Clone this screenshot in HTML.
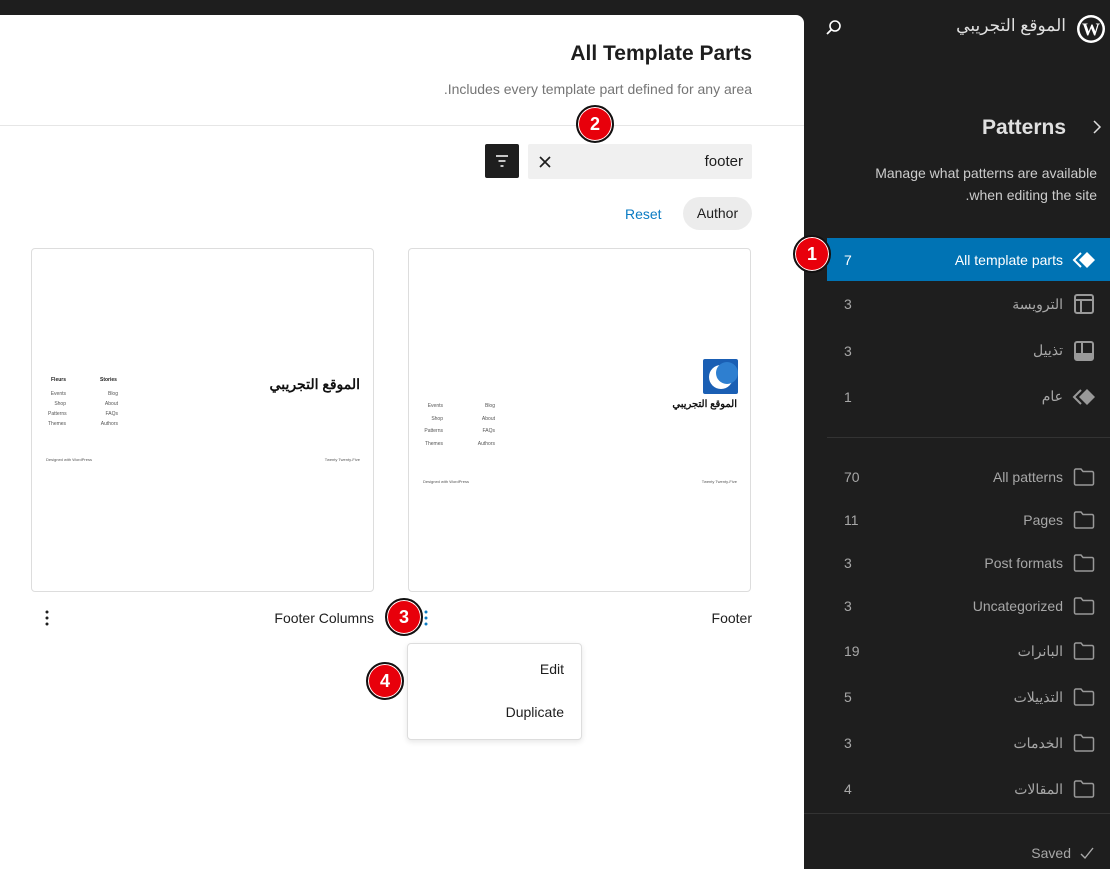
<!DOCTYPE html>
<html><head><meta charset="utf-8"><style>
*{margin:0;padding:0;box-sizing:border-box}
body{width:1110px;height:869px;background:#1e1e1e;font-family:"Liberation Sans","Noto Sans CJK SC",sans-serif;position:relative;overflow:hidden}
.a{position:absolute;white-space:nowrap}
.panel{position:absolute;left:0;top:15px;width:804px;height:854px;background:#fff;border-top-right-radius:8px}
.r{text-align:right}
.side{color:#a7a7a7;font-size:14px}
.badge{position:absolute;width:38px;height:38px;border-radius:50%;background:#e8000b;border:2px solid #111;box-shadow:0 0 0 1px #fff inset;color:#fff;font-weight:bold;font-size:18px;text-align:center;line-height:34px}
.card{position:absolute;top:248px;width:343px;height:344px;border:1px solid #ddd;border-radius:4px;background:#fff}
.t{position:absolute;font-size:5px;color:#555;white-space:nowrap}
</style></head><body>
<div class="panel"></div>
<svg class="a" style="left:1076px;top:14px" width="30" height="30" viewBox="0 0 30 30"><circle cx="15" cy="15" r="14" fill="#fff"/><circle cx="15" cy="15" r="11.5" fill="#1e1e1e"/><text x="15" y="21.5" font-family="Liberation Serif" font-weight="bold" font-size="18" fill="#fff" text-anchor="middle">W</text></svg>
<div class="a" style="right:44px;top:16px;color:#e0e0e0;font-size:17px">الموقع التجريبي</div>
<svg class="a" style="left:825px;top:19px" width="18" height="18" viewBox="0 0 18 18"><circle cx="10" cy="7" r="5" fill="none" stroke="#fff" stroke-width="1.6"/><path d="M6.5 10.5L2 15" stroke="#fff" stroke-width="1.8"/></svg>
<div class="a" style="right:44px;top:116px;color:#e0e0e0;font-size:21px;font-weight:bold">Patterns</div>
<svg class="a" style="left:1092px;top:120px" width="10" height="14"><path d="M2 1l6 6-6 6" fill="none" stroke="#ddd" stroke-width="1.5"/></svg>
<div class="a r" style="right:13px;top:162px;color:#ccc;font-size:14px;line-height:22px">Manage what patterns are available<br>.when editing the site</div>
<div class="a" style="left:827px;top:238px;width:283px;height:43px;background:#0073b4"></div>
<div class="a" style="left:844px;top:252px;color:#fff;font-size:14px">7</div>
<div class="a" style="right:47px;top:252px;color:#fff;font-size:14px">All template parts</div>
<svg class="a" style="left:1072px;top:249px" width="24" height="22" viewBox="0 0 24 22"><path d="M9 4L2 11l7 7" fill="none" stroke="#fff" stroke-width="2"/><path d="M15 3l8 8-8 8-8-8z" fill="#fff"/></svg>
<div class="a side" style="left:844px;top:296px">3</div><div class="a side" style="right:47px;top:296px">الترويسة</div>
<svg class="a" style="left:1074px;top:294px" width="20" height="20"><rect x="1" y="1" width="18" height="18" rx="2" fill="none" stroke="#999" stroke-width="2"/><path d="M1 6h18M7 6v13" stroke="#999" stroke-width="2"/></svg>
<div class="a side" style="left:844px;top:343px">3</div><div class="a side" style="right:47px;top:342px">تذييل</div>
<svg class="a" style="left:1074px;top:341px" width="20" height="20"><rect x="1" y="1" width="18" height="18" rx="2" fill="none" stroke="#999" stroke-width="2"/><rect x="1" y="12" width="18" height="7" fill="#999"/><path d="M8 1v12" stroke="#999" stroke-width="2"/></svg>
<div class="a side" style="left:844px;top:389px">1</div><div class="a side" style="right:47px;top:388px">عام</div>
<svg class="a" style="left:1072px;top:386px" width="24" height="22" viewBox="0 0 24 22"><path d="M9 4L2 11l7 7" fill="none" stroke="#999" stroke-width="2"/><path d="M15 3l8 8-8 8-8-8z" fill="#999"/></svg>
<div class="a" style="left:827px;top:437px;width:283px;height:1px;background:#333"></div>
<div id="folders"></div>
<div class="a" style="left:804px;top:813px;width:306px;height:1px;background:#333"></div>
<div class="a side" style="right:39px;top:845px">Saved</div>
<svg class="a" style="left:1080px;top:846px" width="14" height="14"><path d="M1 8l4 4 8-10" fill="none" stroke="#aaa" stroke-width="1.4"/></svg>
<div class="badge" style="left:793px;top:235px">1</div>

<div class="a" style="right:358px;top:42px;font-size:21px;font-weight:bold;color:#1e1e1e">All Template Parts</div>
<div class="a" style="right:358px;top:81px;font-size:14px;color:#757575">.Includes every template part defined for any area</div>
<div class="a" style="left:0;top:125px;width:804px;height:1px;background:#e6e6e6"></div>
<div class="a" style="left:485px;top:144px;width:34px;height:34px;background:#1e1e1e;border-radius:2px"></div>
<svg class="a" style="left:493px;top:152px" width="18" height="18"><path d="M3 4h12M5.5 9h7M7.5 14h3" stroke="#fff" stroke-width="1.5"/></svg>
<div class="a" style="left:528px;top:144px;width:224px;height:35px;background:#f0f0f0;border-radius:2px"></div>
<div class="a" style="right:367px;top:153px;font-size:15px;color:#1e1e1e">footer</div>
<svg class="a" style="left:538px;top:155px" width="14" height="14"><path d="M2 2l10 10M12 2L2 12" stroke="#1e1e1e" stroke-width="1.7"/></svg>
<div class="a" style="left:683px;top:197px;width:69px;height:33px;background:#ececec;border-radius:17px;font-size:14px;color:#1e1e1e;text-align:center;line-height:33px">Author</div>
<div class="a" style="left:625px;top:206px;font-size:14px;color:#0a7bc3">Reset</div>
<div class="badge" style="left:576px;top:105px">2</div>

<div class="card" style="left:31px">
 <div class="a" style="right:13px;top:127px;font-size:14px;font-weight:bold;color:#111">الموقع التجريبي</div>
 <div class="t" style="left:19px;top:128px;font-weight:bold;color:#222">Fleurs</div>
 <div class="t" style="left:68px;top:128px;font-weight:bold;color:#222">Stories</div>
 <div class="t" style="left:16px;top:140px;line-height:10px;text-align:right;width:18px">Events<br>Shop<br>Patterns<br>Themes</div>
 <div class="t" style="left:66px;top:140px;line-height:10px;text-align:right;width:20px">Blog<br>About<br>FAQs<br>Authors</div>
 <div class="t" style="left:14px;top:208px;font-size:4px">Designed with WordPress</div>
 <div class="t" style="right:13px;top:208px;font-size:4px">Twenty Twenty-Five</div>
</div>
<div class="card" style="left:408px">
 <svg class="a" style="left:294px;top:110px" width="35" height="35"><rect width="35" height="35" rx="2" fill="#1a5fb4"/><circle cx="18" cy="18" r="12" fill="#fff"/><circle cx="24" cy="14" r="11" fill="#2e7fd0"/></svg>
 <div class="a" style="right:13px;top:150px;font-size:10px;font-weight:bold;color:#111">الموقع التجريبي</div>
 <div class="t" style="left:14px;top:151px;line-height:12.5px;text-align:right;width:20px">Events<br>Shop<br>Patterns<br>Themes</div>
 <div class="t" style="left:66px;top:151px;line-height:12.5px;text-align:right;width:20px">Blog<br>About<br>FAQs<br>Authors</div>
 <div class="t" style="left:14px;top:230px;font-size:4px">Designed with WordPress</div>
 <div class="t" style="right:13px;top:230px;font-size:4px">Twenty Twenty-Five</div>
</div>
<div class="a" style="right:358px;top:610px;font-size:14px;color:#1e1e1e">Footer</div>
<div class="a" style="right:736px;top:610px;font-size:14px;color:#1e1e1e">Footer Columns</div>
<svg class="a" style="left:44px;top:609px" width="6" height="18"><circle cx="3" cy="3" r="1.5" fill="#1e1e1e"/><circle cx="3" cy="9" r="1.5" fill="#1e1e1e"/><circle cx="3" cy="15" r="1.5" fill="#1e1e1e"/></svg>
<svg class="a" style="left:423px;top:609px" width="6" height="18"><circle cx="3" cy="3" r="1.5" fill="#0a7bc3"/><circle cx="3" cy="9" r="1.5" fill="#0a7bc3"/><circle cx="3" cy="15" r="1.5" fill="#0a7bc3"/></svg>
<div class="a" style="left:407px;top:643px;width:175px;height:97px;background:#fff;border:1px solid #ddd;border-radius:4px;box-shadow:0 2px 6px rgba(0,0,0,.1)"></div>
<div class="a" style="right:546px;top:661px;font-size:14px;color:#1e1e1e">Edit</div>
<div class="a" style="right:546px;top:704px;font-size:14px;color:#1e1e1e">Duplicate</div>
<div class="badge" style="left:385px;top:598px">3</div>
<div class="badge" style="left:366px;top:662px">4</div>

<script>
var f=[["All patterns",70,477,0],["Pages",11,520,0],["Post formats",3,563,0],["Uncategorized",3,606,0],["البانرات",19,651,1],["التذييلات",5,697,1],["الخدمات",3,743,1],["المقالات",4,789,1]];
var h="";f.forEach(function(x){var y=x[2];
h+='<div class="a side" style="left:844px;top:'+(y-8)+'px">'+x[1]+'</div><div class="a side" style="right:47px;top:'+(y-9+(x[3]?1:1))+'px">'+x[0]+'</div><svg class="a" style="left:1073px;top:'+(y-10)+'px" width="22" height="20"><path d="M1.5 3.5a1.5 1.5 0 0 1 1.5-1.5h5l2 2.5h9a1.5 1.5 0 0 1 1.5 1.5v10.5a1.5 1.5 0 0 1-1.5 1.5H3a1.5 1.5 0 0 1-1.5-1.5z" fill="none" stroke="#999" stroke-width="1.5"/></svg>';});
document.getElementById("folders").innerHTML=h;
</script>
</body></html>
